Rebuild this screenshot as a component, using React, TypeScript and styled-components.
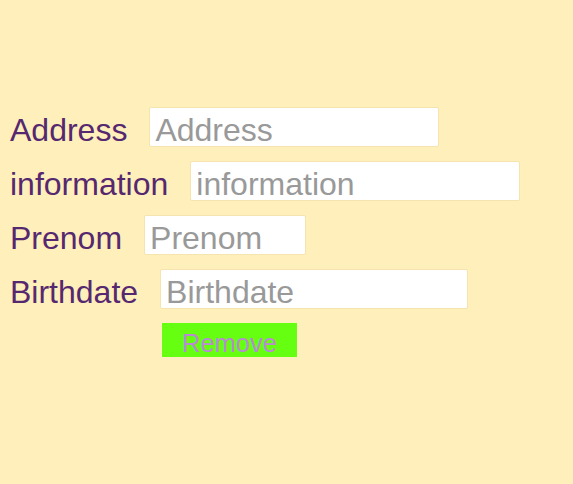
import React from 'react';
import styled, { createGlobalStyle } from 'styled-components';

const GlobalStyle = createGlobalStyle`
   html, body {
      margin: 0;
      padding: 0;
      background-color: #ffefbb;
   }
   body {
      font-family: 'Liberation Sans', Arial, sans-serif;
      min-height: 484px;
   }
`;

type FieldType = {
   name: string;
   width: number;
};

const fields: FieldType[] = [
   { name: 'Address', width: 290 },
   { name: 'information', width: 330 },
   { name: 'Prenom', width: 162 },
   { name: 'Birthdate', width: 308 },
];

export default function App() {
   return (
      <>
         <GlobalStyle />
         <StyledForm>
            {fields.map((f) => (
               <Row key={f.name}>
                  <Label htmlFor={f.name}>{f.name}</Label>
                  <Input id={f.name} placeholder={f.name} $width={f.width} />
               </Row>
            ))}
            <RemoveButton type="button">Remove</RemoveButton>
         </StyledForm>
      </>
   );
}

const StyledForm = styled.form`
   display: flex;
   flex-direction: column;
   align-items: flex-start;
   gap: 14px;
   padding: 107px 0 0 10px;
`;

const Row = styled.div`
   display: flex;
   align-items: center;
   height: 40px;
`;

const Label = styled.label`
   color: #55286f;
   font-size: 32px;
   line-height: 40px;
   padding-top: 6px;
   margin-right: 22px;
`;

const Input = styled.input<{ $width: number }>`
   box-sizing: border-box;
   width: ${(p) => p.$width}px;
   height: 40px;
   padding: 6px 5px 0 5px;
   border: 1px solid #f5e4ad;
   border-radius: 2px;
   background: #fff;
   font-family: 'Liberation Sans', Arial, sans-serif;
   font-size: 32px;
   color: #333;
   outline: none;

   &::placeholder {
      color: #999;
   }
`;

const RemoveButton = styled.button`
   box-sizing: border-box;
   margin-left: 152px;
   width: 135px;
   height: 34px;
   border: none;
   padding: 0;
   background-color: #66ff11;
   color: #b98bd3;
   font-family: 'Liberation Sans', Arial, sans-serif;
   font-size: 25.5px;
   line-height: 40px;
   cursor: pointer;
`;
